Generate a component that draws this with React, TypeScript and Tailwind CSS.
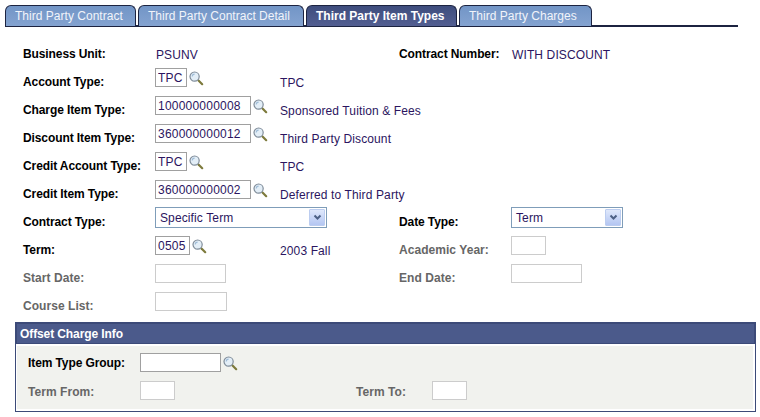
import type { ReactNode } from "react";

const LookupIcon = () => (
  <svg width="15" height="15" viewBox="0 0 15 15" className="shrink-0">
    <line x1="9.5" y1="9.5" x2="13.2" y2="13.2" stroke="#7d7a3c" strokeWidth="2.2" strokeLinecap="round" />
    <circle cx="5.6" cy="5.6" r="4.6" fill="#e3eef7" stroke="#7f8c99" strokeWidth="1.2" />
    <path d="M3.2 5.6 A2.6 2.6 0 0 1 5.6 3.1" fill="none" stroke="#9dbbd6" strokeWidth="1.1" />
  </svg>
);

const Field = ({ value = "", w, disabled = false }: { value?: string; w: string; disabled?: boolean }) => (
  <input
    readOnly
    value={value}
    className={`${w} h-[19px] shrink-0 border bg-white pl-[2px] text-[12px] tracking-[0.22px] text-[#2b1560] outline-none ${
      disabled ? "border-[#cccccc]" : "border-[#a0a0a0]"
    }`}
  />
);

const Select = ({ value, w }: { value: string; w: string }) => (
  <div className={`${w} -mt-px flex h-[21px] items-center justify-between border border-[#7f9db9] bg-white pr-px text-[12px] tracking-[0.12px] text-[#2b1560]`}>
    <span className="pl-[4px]">{value}</span>
    <span className="flex h-[17px] w-[16px] items-center justify-center rounded-[1px] border border-[#bccdf0] bg-gradient-to-b from-[#dfe8fb] to-[#b4c6f2]">
      <svg width="9" height="7" viewBox="0 0 9 7">
        <path d="M1.5 1.5 L4.5 4.5 L7.5 1.5" fill="none" stroke="#4d6185" strokeWidth="2" />
      </svg>
    </span>
  </div>
);

const Label = ({ children, w, muted = false, pt = "pt-[7px]" }: { children: ReactNode; w: string; muted?: boolean; pt?: string }) => (
  <div className={`${w} ${pt} shrink-0 whitespace-nowrap font-bold ${muted ? "tracking-[0.05px] text-[#666666]" : "tracking-[-0.1px] text-black"}`}>{children}</div>
);

const Text = ({ children, w = "" }: { children: ReactNode; w?: string }) => (
  <div className={`${w} whitespace-nowrap pt-[8px] tracking-[0.12px] text-[#2b1560]`}>{children}</div>
);

// field column runs from x=155 to x=280, description sits after it
const Row = ({ label, muted, children, right }: { label: string; muted?: boolean; children: ReactNode; right?: ReactNode }) => (
  <div className="flex h-[28px]">
    <Label w="w-[132px]" muted={muted}>{label}</Label>
    <div className="flex w-[244px] shrink-0">{children}</div>
    {right}
  </div>
);

const Lookup = ({ value, w, desc }: { value: string; w: string; desc: string }) => (
  <>
    <div className="flex w-[125px] shrink-0 items-start gap-[2px]">
      <Field value={value} w={w} />
      <div className="pt-[3px]"><LookupIcon /></div>
    </div>
    <Text>{desc}</Text>
  </>
);

const tabs = ["Third Party Contract", "Third Party Contract Detail", "Third Party Item Types", "Third Party Charges"];
const tabWidths = ["w-[131px]", "w-[166px]", "w-[151px]", "w-[133px]"];

export default function App() {
  return (
    <div className="h-[417px] w-[760px] overflow-hidden bg-white text-[12px] leading-[14px] text-black [font-family:'Liberation_Sans',Arial,sans-serif]">
      <div className="ml-[5px] mt-[5px] flex h-[22px] w-[733px] gap-[2px] border-b-2 border-[#1c2340]">
        {tabs.map((t, i) => (
          <div
            key={t}
            className={`${tabWidths[i]} flex h-[21px] shrink-0 items-center rounded-t-[6px] border-x border-t border-[#1c2340] pl-[9px] ${
              i === 2
                ? "bg-gradient-to-b from-[#3e4d7d] to-[#535f92] font-bold text-white"
                : "bg-gradient-to-b from-[#7295c6] to-[#84a3d0] tracking-[0.02px] text-[#f1f4fa]"
            }`}
          >
            {t}
          </div>
        ))}
      </div>

      <div className="ml-[23px] mt-[13px]">
        <Row
          label="Business Unit:"
          right={
            <>
              <Label w="w-[113px]">Contract Number:</Label>
              <Text>WITH DISCOUNT</Text>
            </>
          }
        >
          <div className="pl-px"><Text>PSUNV</Text></div>
        </Row>
        <Row label="Account Type:"><Lookup value="TPC" w="w-[32px]" desc="TPC" /></Row>
        <Row label="Charge Item Type:"><Lookup value="100000000008" w="w-[96px]" desc="Sponsored Tuition & Fees" /></Row>
        <Row label="Discount Item Type:"><Lookup value="360000000012" w="w-[96px]" desc="Third Party Discount" /></Row>
        <Row label="Credit Account Type:"><Lookup value="TPC" w="w-[32px]" desc="TPC" /></Row>
        <Row label="Credit Item Type:"><Lookup value="360000000002" w="w-[96px]" desc="Deferred to Third Party" /></Row>
        <Row label="Contract Type:" right={<><Label w="w-[112px]">Date Type:</Label><Select value="Term" w="w-[112px]" /></>}>
          <Select value="Specific Term" w="w-[172px]" />
        </Row>
        <Row label="Term:" right={<><Label w="w-[112px]" muted>Academic Year:</Label><Field w="w-[35px]" disabled /></>}>
          <Lookup value="0505" w="w-[35px]" desc="2003 Fall" />
        </Row>
        <Row label="Start Date:" muted right={<><Label w="w-[112px]" muted>End Date:</Label><Field w="w-[71px]" disabled /></>}>
          <Field w="w-[71px]" disabled />
        </Row>
        <Row label="Course List:" muted>
          <Field w="w-[72px]" disabled />
        </Row>
      </div>

      <div className="ml-[15px] mt-[2px] h-[90px] w-[741px] border border-[#3c4a78] bg-white">
        <div className="flex h-[21px] items-center border border-[#3c4a78] bg-[#4b5a8b] pl-[3px] font-bold tracking-[-0.1px] text-white">Offset Charge Info</div>
        <div className="mx-[1px] mt-[2px] h-[63px] w-[736px] bg-[#f1f2ee] pl-[11px] pt-[7px]">
          <div className="flex h-[28px]">
            <Label w="w-[112px]" pt="pt-[3px]">Item Type Group:</Label>
            <Field w="w-[81px]" />
            <div className="pl-[2px] pt-[3px]"><LookupIcon /></div>
          </div>
          <div className="flex h-[28px]">
            <Label w="w-[112px]" muted pt="pt-[4px]">Term From:</Label>
            <Field w="w-[35px]" disabled />
            <div className="w-[181px] shrink-0" />
            <Label w="w-[76px]" muted pt="pt-[4px]">Term To:</Label>
            <Field w="w-[35px]" disabled />
          </div>
        </div>
      </div>
    </div>
  );
}
